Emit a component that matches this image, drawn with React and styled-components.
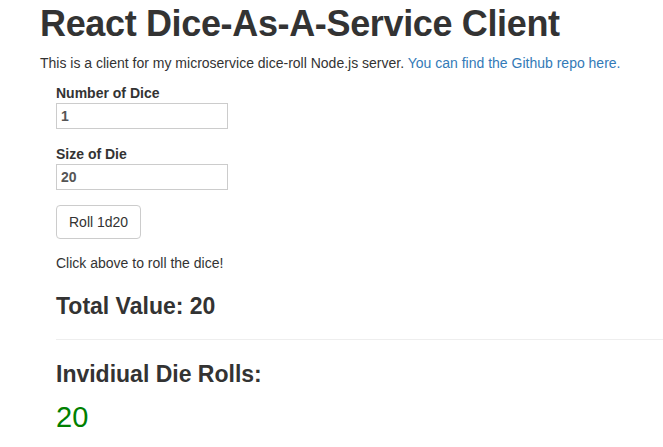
import styled, { createGlobalStyle } from 'styled-components';

const GlobalStyle = createGlobalStyle`
  * {
    box-sizing: border-box;
  }

  body {
    margin: 0;
    background: #fff;
    color: #333;
    font-family: 'Liberation Sans', Arial, sans-serif;
    font-size: 14px;
    line-height: 1.42857;
  }
`;

const Page = styled.div`
  padding: 0 0 0 40px;
  overflow: hidden;
`;

const Title = styled.h1`
  margin: 0;
  padding-top: 2px;
  font-size: 36px;
  line-height: 44px;
  font-weight: 700;
  letter-spacing: -0.35px;
  color: #333;
`;

const Intro = styled.p`
  margin: 8px 0 0;
`;

const Link = styled.a`
  color: #337ab7;
  text-decoration: none;
`;

const Content = styled.div`
  padding-left: 16px;
`;

const Form = styled.form`
  display: flex;
  flex-direction: column;
  padding-top: 9px;
`;

const Field = styled.div`
  display: flex;
  flex-direction: column;
  margin-bottom: 15px;
`;

const Label = styled.label`
  font-weight: 700;
  line-height: 20px;
`;

const Input = styled.input`
  width: 172px;
  height: 26px;
  padding: 2px 4px;
  border: 1px solid #ccc;
  font-family: inherit;
  font-size: 14px;
  font-weight: 700;
  color: #555;
`;

const Button = styled.button`
  align-self: flex-start;
  height: 34px;
  padding: 6px 12px;
  border: 1px solid #ccc;
  border-radius: 4px;
  background: #fff;
  color: #333;
  font-family: inherit;
  font-size: 14px;
`;

const Hint = styled.p`
  margin: 15px 0 0;
`;

const Heading = styled.h3`
  margin: ${({ $top }) => $top}px 0 0;
  font-size: 23px;
  line-height: 30px;
  font-weight: 700;
`;

const Rule = styled.hr`
  margin: 18px 0 0;
  border: 0;
  border-top: 1px solid #eee;
`;

const Roll = styled.div`
  margin-top: 10px;
  font-size: 29px;
  line-height: 36px;
  color: #008000;
`;

const App = () => (
  <Page>
    <GlobalStyle />
    <Title>React Dice-As-A-Service Client</Title>
    <Intro>
      This is a client for my microservice dice-roll Node.js server.{' '}
      <Link href="#">You can find the Github repo here.</Link>
    </Intro>
    <Content>
      <Form onSubmit={(e) => e.preventDefault()}>
        <Field>
          <Label htmlFor="count">Number of Dice</Label>
          <Input id="count" defaultValue="1" />
        </Field>
        <Field>
          <Label htmlFor="size">Size of Die</Label>
          <Input id="size" defaultValue="20" />
        </Field>
        <Button type="submit">Roll 1d20</Button>
      </Form>
      <Hint>Click above to roll the dice!</Hint>
      <Heading $top={17}>Total Value: 20</Heading>
      <Rule />
      <Heading $top={19}>Invidiual Die Rolls:</Heading>
      <Roll>20</Roll>
    </Content>
  </Page>
);

export default App;
